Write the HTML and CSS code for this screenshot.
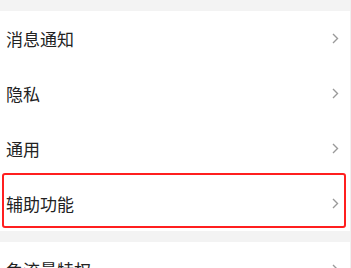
FILE: index.html
```html
<!DOCTYPE html>
<html lang="zh">
<head>
<meta charset="utf-8">
<link rel="stylesheet" href="styles.css">
</head>
<body>
<div class="page">
  <div class="gap gap-top"></div>
  <div class="group">
    <div class="row"><span class="label">消息通知</span><svg class="chev" viewBox="0 0 7 11"><path d="M1 1 L5.5 5.5 L1 10"/></svg></div>
    <div class="row"><span class="label">隐私</span><svg class="chev" viewBox="0 0 7 11"><path d="M1 1 L5.5 5.5 L1 10"/></svg></div>
    <div class="row"><span class="label">通用</span><svg class="chev" viewBox="0 0 7 11"><path d="M1 1 L5.5 5.5 L1 10"/></svg></div>
    <div class="row highlighted"><span class="label">辅助功能</span><svg class="chev" viewBox="0 0 7 11"><path d="M1 1 L5.5 5.5 L1 10"/></svg><div class="mark"></div></div>
  </div>
  <div class="gap"></div>
  <div class="group">
    <div class="row"><span class="label">免流量特权</span><svg class="chev" viewBox="0 0 7 11"><path d="M1 1 L5.5 5.5 L1 10"/></svg></div>
  </div>
</div>
</body>
</html>
```
FILE: styles.css
```css
html, body {
  margin: 0;
  padding: 0;
  background: #ffffff;
}
.page {
  width: 351px;
  height: 268px;
  overflow: hidden;
  font-family: "Noto Sans CJK SC", "Noto Sans", sans-serif;
  color: #222222;
  border-right: 1px solid #f0f0f0;
  box-sizing: border-box;
}
.gap {
  height: 11px;
  background: #f3f3f3;
}
.group {
  background: #ffffff;
}
.row {
  position: relative;
  height: 55px;
  display: flex;
  align-items: center;
  justify-content: space-between;
  padding: 0 11px 0 6px;
}
.label {
  font-size: 17px;
  line-height: 1;
}
.chev {
  width: 7px;
  height: 11px;
  fill: none;
  stroke: #9a9a9a;
  stroke-width: 1.4;
}
.mark {
  position: absolute;
  left: 2px;
  right: 4px;
  top: -3px;
  bottom: 3px;
  border: 2.5px solid #ff1f1f;
  border-radius: 3px;
}
```
